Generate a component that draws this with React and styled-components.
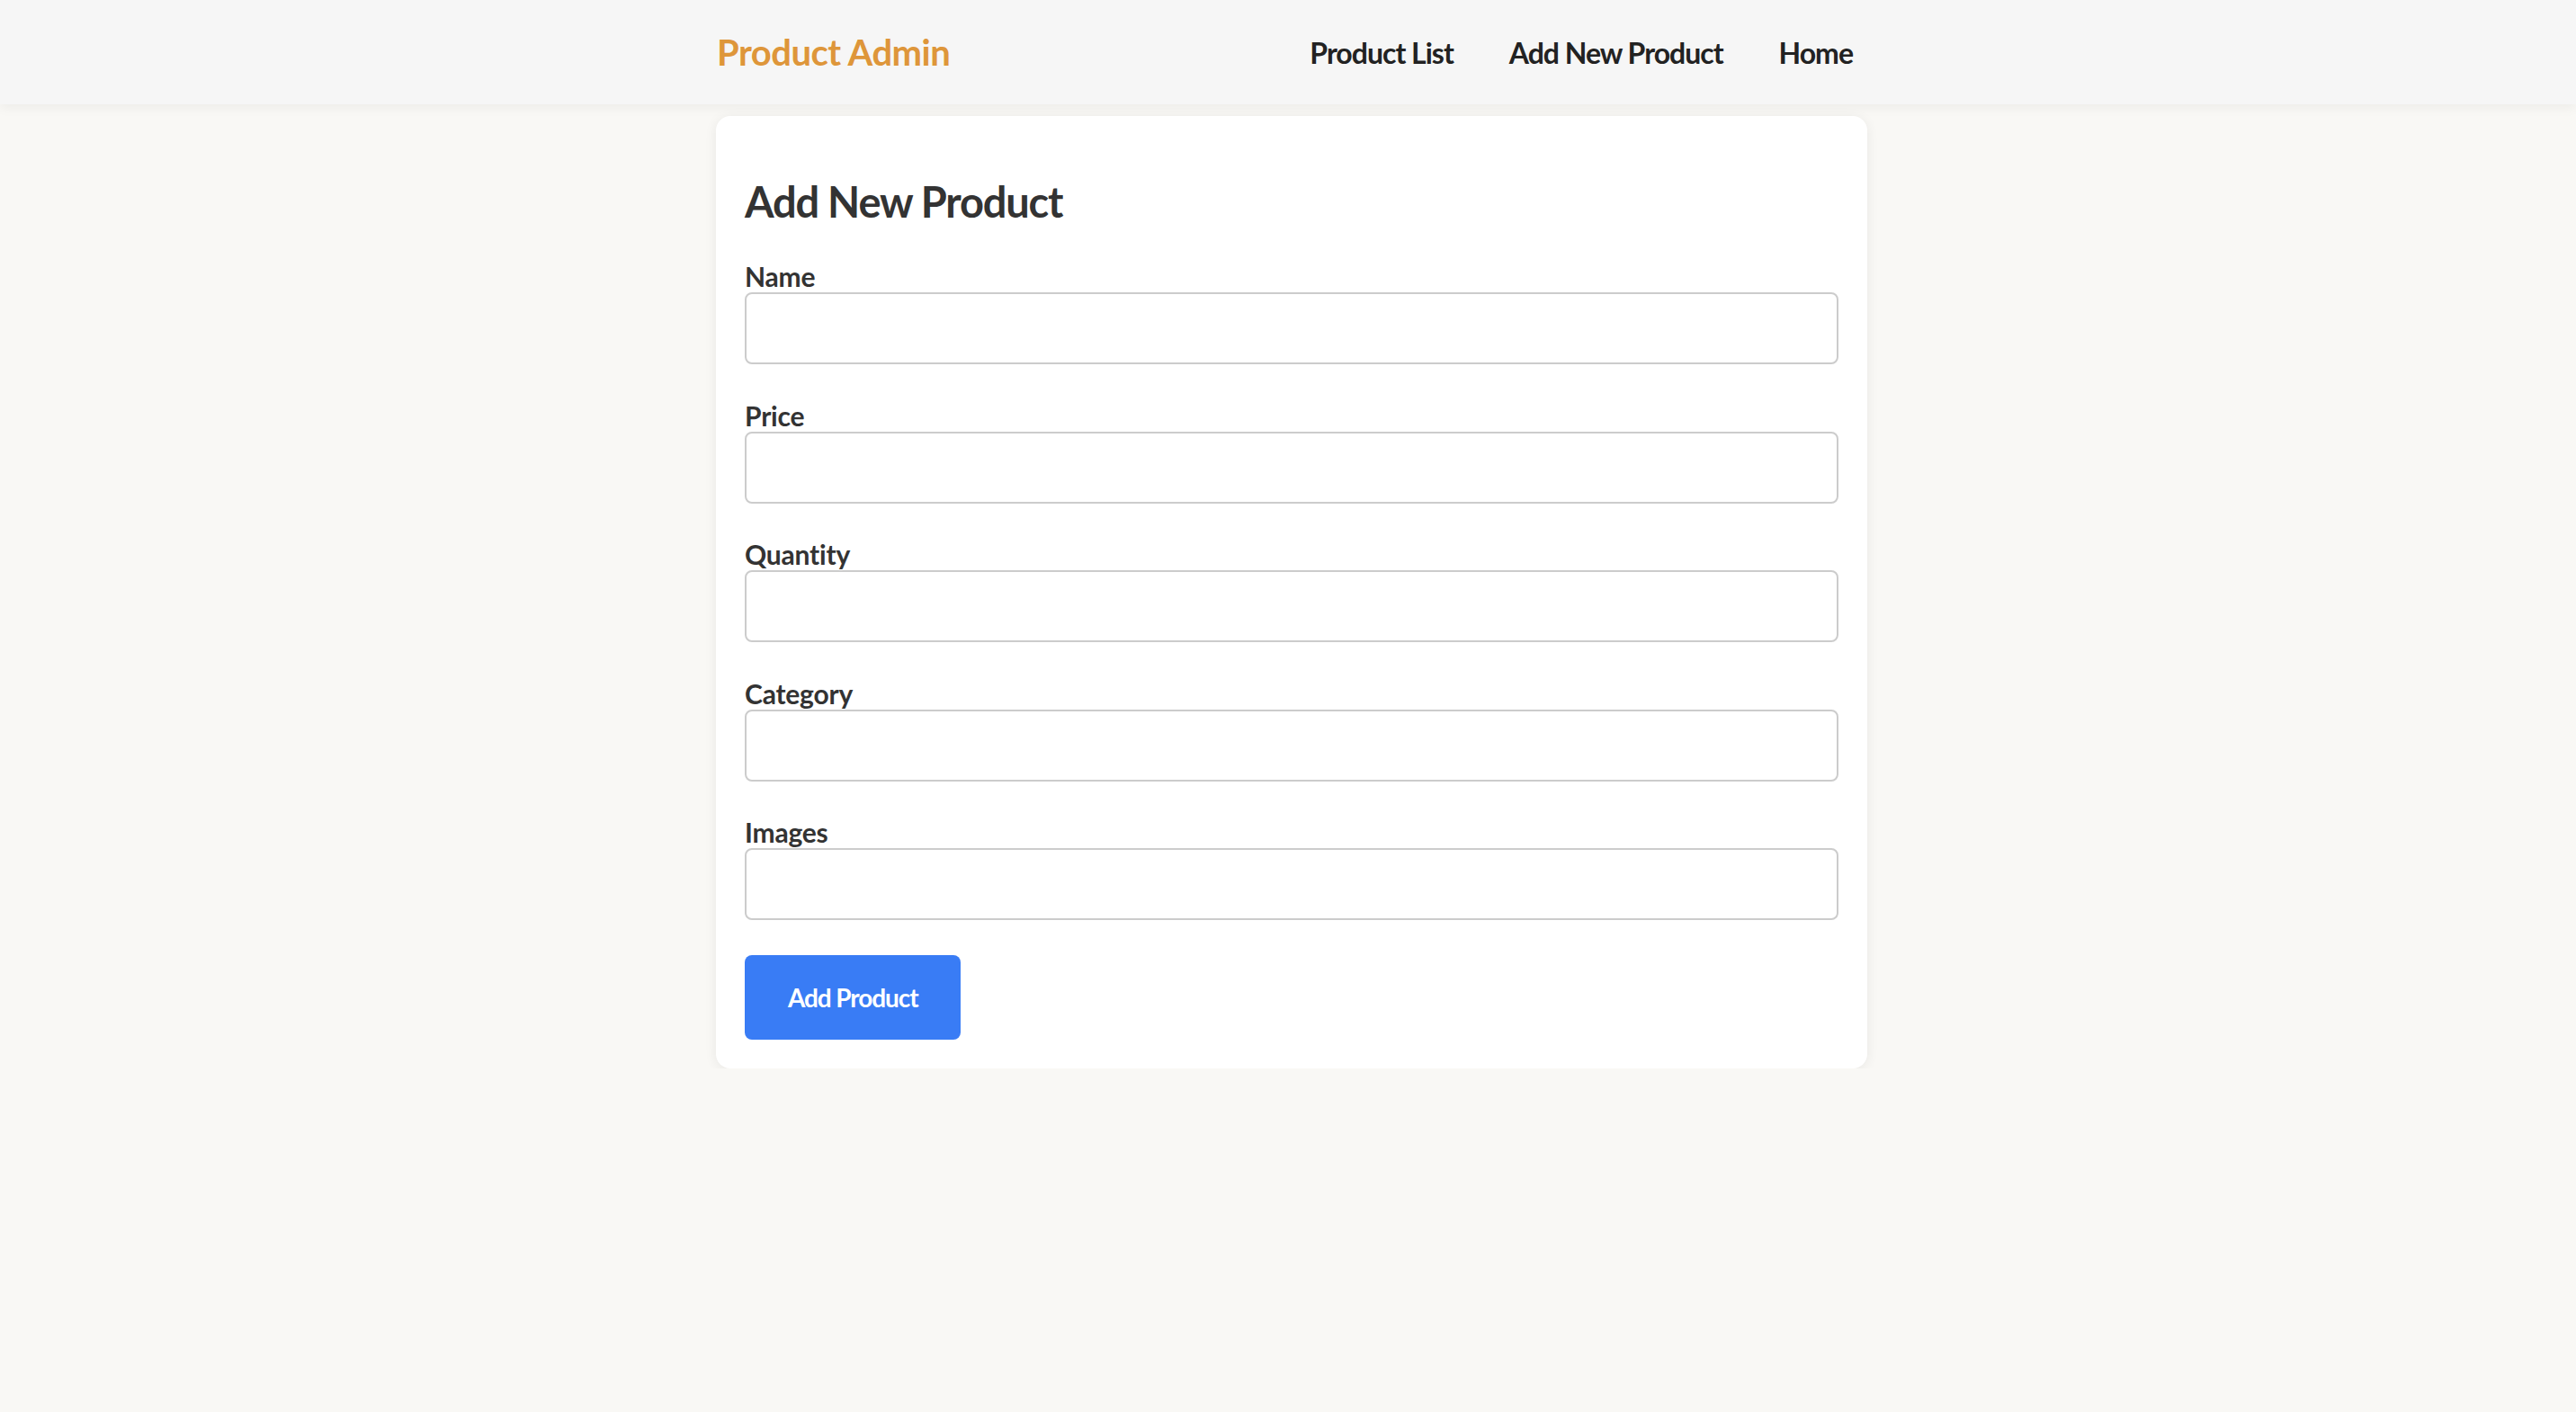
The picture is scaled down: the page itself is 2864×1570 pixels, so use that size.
import styled, { createGlobalStyle } from "styled-components";

const GlobalStyle = createGlobalStyle`
  * {
    box-sizing: border-box;
  }

  html,
  body {
    margin: 0;
    padding: 0;
    background-color: #f9f8f5;
    font-family: Lato, "Open Sans", "Liberation Sans", sans-serif;
  }
`;

const fields = ["Name", "Price", "Quantity", "Category", "Images"];

const navItems = ["Product List", "Add New Product", "Home"];

const HeaderBar = styled.header`
  position: relative;
  width: 100%;
  height: 116px;
  padding-left: 8px;
  background-color: #f6f6f6;
  box-shadow: 0 4px 12px rgba(0, 0, 0, 0.05);
`;

const HeaderInner = styled.div`
  max-width: 1280px;
  height: 100%;
  margin: 0 auto;
  display: flex;
  align-items: center;
  justify-content: space-between;
`;

const Logo = styled.a`
  font-size: 40px;
  font-weight: 700;
  letter-spacing: -0.5px;
  color: #de963a;
  text-decoration: none;
  padding-left: 1px;
`;

const Nav = styled.nav`
  display: flex;
  align-items: center;
  gap: 30px;
`;

const NavLink = styled.a`
  font-size: 32px;
  font-weight: 700;
  letter-spacing: -1px;
  color: #222222;
  text-decoration: none;
  padding: 0 16px;
  cursor: pointer;
`;

const Main = styled.main`
  position: relative;
  padding: 13px 0 0 8px;
`;

const Card = styled.section`
  max-width: 1280px;
  margin: 0 auto;
  padding: 32px;
  background-color: #ffffff;
  border-radius: 16px;
  box-shadow: 0 2px 14px rgba(0, 0, 0, 0.07);
`;

const Title = styled.h2`
  margin: 35px 0 37px;
  font-size: 47px;
  font-weight: 700;
  letter-spacing: -1.2px;
  line-height: 1.2;
  color: #333333;
`;

const Field = styled.div`
  margin-bottom: 38.5px;
`;

const Label = styled.label`
  display: block;
  font-size: 30px;
  font-weight: 700;
  letter-spacing: -0.2px;
  line-height: 1.2;
  color: #333333;
`;

const Input = styled.input`
  display: block;
  width: 100%;
  height: 80px;
  padding: 0 20px;
  border: 2px solid #cccccc;
  border-radius: 8px;
  background-color: #ffffff;
  font-family: inherit;
  font-size: 28px;
  outline: none;
`;

const SubmitButton = styled.button`
  display: block;
  padding: 0 48px;
  height: 94px;
  border: none;
  border-radius: 8px;
  background-color: #397cf5;
  color: #ffffff;
  font-family: inherit;
  font-size: 28px;
  font-weight: 700;
  letter-spacing: -1.1px;
  cursor: pointer;
`;

function App() {
  return (
    <>
      <GlobalStyle />
      <HeaderBar>
        <HeaderInner>
          <Logo>Product Admin</Logo>
          <Nav>
            {navItems.map((item) => (
              <NavLink key={item}>{item}</NavLink>
            ))}
          </Nav>
        </HeaderInner>
      </HeaderBar>

      <Main>
        <Card>
          <Title>Add New Product</Title>
          <form onSubmit={(e) => e.preventDefault()}>
            {fields.map((f) => (
              <Field key={f}>
                <Label htmlFor={f.toLowerCase()}>{f}</Label>
                <Input id={f.toLowerCase()} type="text" />
              </Field>
            ))}
            <SubmitButton type="submit">Add Product</SubmitButton>
          </form>
        </Card>
      </Main>
    </>
  );
}

export default App;
